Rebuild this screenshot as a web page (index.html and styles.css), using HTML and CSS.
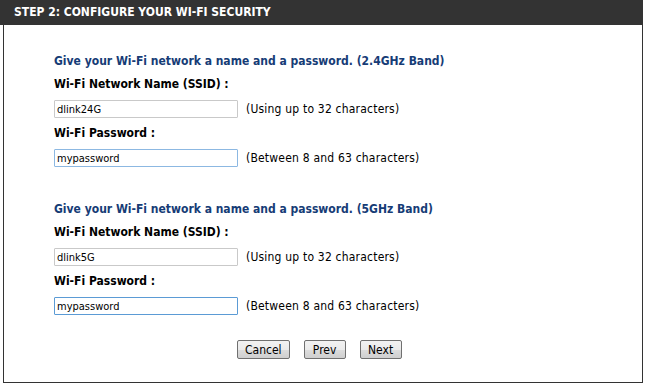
FILE: index.html
```html
<!DOCTYPE html>
<html>
<head>
  <meta charset="UTF-8">
  <title>Setup Wizard</title>
  <link rel="stylesheet" href="styles.css">
</head>
<body>
  <div id="wizard">
    <div id="header">STEP 2: CONFIGURE YOUR WI-FI SECURITY</div>
    <div id="content">
      <div class="band">
        <div class="title">Give your Wi-Fi network a name and a password. (2.4GHz Band)</div>
        <div class="label">Wi-Fi Network Name (SSID) :</div>
        <div class="row"><input type="text" class="field" value="dlink24G"><span class="hint">(Using up to 32 characters)</span></div>
        <div class="label">Wi-Fi Password :</div>
        <div class="row"><input type="text" class="field blue" value="mypassword"><span class="hint">(Between 8 and 63 characters)</span></div>
      </div>
      <div class="band">
        <div class="title">Give your Wi-Fi network a name and a password. (5GHz Band)</div>
        <div class="label">Wi-Fi Network Name (SSID) :</div>
        <div class="row"><input type="text" class="field" value="dlink5G"><span class="hint">(Using up to 32 characters)</span></div>
        <div class="label">Wi-Fi Password :</div>
        <div class="row"><input type="text" class="field focus" value="mypassword" autofocus><span class="hint">(Between 8 and 63 characters)</span></div>
      </div>
      <div class="buttons">
        <button class="button">Cancel</button>
        <button class="button">Prev</button>
        <button class="button">Next</button>
      </div>
    </div>
  </div>
</body>
</html>
```

FILE: styles.css
```css
html {
	margin:0px;
	padding:0px;
}

body {
	margin:0px;
	padding:0px;
	background:#ffffff;
	font-family:"DejaVu Sans Condensed","DejaVu Sans",Verdana,sans-serif;
	font-size:12px;
	color:#000000;
}

#wizard {
	width:643px;
}

#header {
	background:#333333;
	color:#ffffff;
	font-weight:bold;
	font-size:12px;
	height:25px;
	line-height:25px;
	padding-left:14px;
}

#content {
	margin-left:3px;
	height:358px;
	border-left:1px solid #333333;
	border-right:1px solid #333333;
	border-bottom:1px solid #333333;
	padding-left:50px;
	padding-top:29px;
	box-sizing:border-box;
}

.band {
	margin-bottom:35px;
}

.title {
	color:#163c76;
	font-weight:bold;
	height:14px;
	line-height:14px;
	margin-bottom:9px;
}

.label {
	font-weight:bold;
	height:14px;
	line-height:14px;
	margin-bottom:9px;
}

.row {
	display:flex;
	align-items:center;
	gap:8px;
	height:18px;
	margin-bottom:8px;
}

.field {
	width:184px;
	height:18px;
	box-sizing:border-box;
	margin:0px;
	padding:0px 2px;
	border:1px solid #c9c9c9;
	border-radius:1px;
	font-family:"DejaVu Sans Condensed","DejaVu Sans",sans-serif;
	font-size:11px;
	color:#000000;
	outline:none;
}

.field.blue {
	border-color:#8cb8e2;
}

.field.focus {
	border-color:#5b9bd5;
}

.hint {
	font-size:12px;
	letter-spacing:0.2px;
}

.buttons {
	display:flex;
	gap:14px;
	padding-left:183px;
	margin-top:-10px;
}

.button {
	height:19px;
	min-width:42px;
	padding:0px 7px;
	margin:0px;
	border:1px solid #707070;
	border-radius:2px;
	background:linear-gradient(#f2f2f2, #ebebeb 50%, #dddddd 50%, #cfcfcf);
	font-family:"DejaVu Sans Condensed","DejaVu Sans",sans-serif;
	font-size:12px;
	color:#000000;
}
```
